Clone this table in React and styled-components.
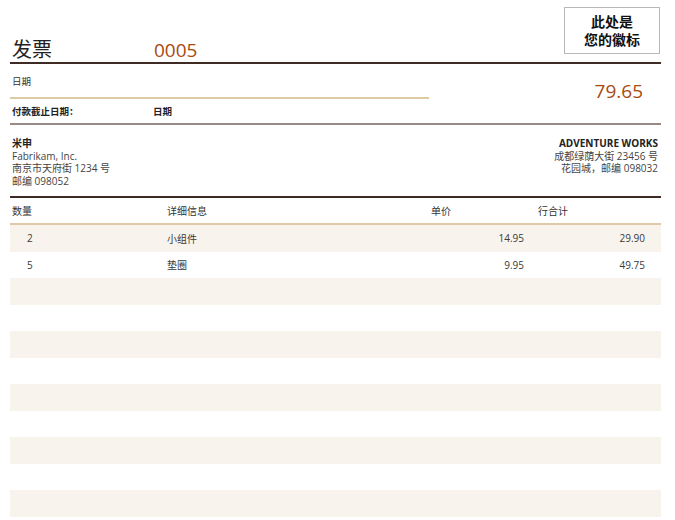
import React from "react";
import styled, { createGlobalStyle } from "styled-components";

const GlobalStyle = createGlobalStyle`
  html, body {
    margin: 0;
    padding: 0;
    overflow: hidden;
    background: #fff;
  }
  body {
    font-family: "Open Sans", "Noto Sans CJK SC", sans-serif;
    color: #333;
  }
`;

const Page = styled.div`
  width: 651px;
  margin-left: 10px;
`;

const Header = styled.div`
  display: flex;
  align-items: flex-end;
  padding-top: 7px;
  border-bottom: 2px solid #3d2b24;
`;

const Title = styled.div`
  width: 142px;
  padding-left: 2px;
  font-size: 20px;
  line-height: 24px;
  color: #222;
`;

const InvoiceNo = styled.div`
  flex: 1;
  font-size: 19px;
  line-height: 24px;
  color: #a84a10;
`;

const LogoBox = styled.div`
  width: 94px;
  height: 45px;
  margin: 0 1px 8px 0;
  border: 1px solid #b8b8b8;
  display: flex;
  flex-direction: column;
  justify-content: center;
  align-items: center;
  font-size: 14px;
  line-height: 18px;
  font-weight: bold;
  color: #111;
`;

const InfoGrid = styled.div`
  display: grid;
  grid-template-columns: 419px 1fr;
  border-bottom: 2px solid #9a8a86;
`;

const DateCell = styled.div`
  height: 33px;
  display: flex;
  align-items: center;
  padding-left: 2px;
  border-bottom: 2px solid #dccba4;
  font-size: 9.5px;
  color: #333;
`;

const DueCell = styled.div`
  height: 24px;
  display: flex;
  align-items: center;
  padding-left: 2px;
  font-size: 9.5px;
  font-weight: bold;
  color: #222;
`;

const DueLabel = styled.span`
  width: 141px;
`;

const Amount = styled.div`
  grid-column: 2;
  grid-row: 1 / span 2;
  align-self: center;
  text-align: right;
  padding: 0 18px 6px 0;
  font-size: 19px;
  line-height: 24px;
  color: #a84a10;
`;

const Parties = styled.div`
  display: flex;
  justify-content: space-between;
  padding: 12px 3px 9px 2px;
  border-bottom: 2px solid #3d2b24;
  font-size: 10px;
  line-height: 12.5px;
  color: #444;
`;

const Party = styled.div`
  text-align: ${(p) => (p.right ? "right" : "left")};
`;

const PartyName = styled.div`
  font-weight: bold;
  color: #222;
`;

const Table = styled.div`
  display: grid;
  grid-template-columns: 157px 264px 107px 123px;
  font-size: 10px;
  color: #3a3a3a;
`;

const HeadCell = styled.div`
  height: 25px;
  display: flex;
  align-items: center;
  padding-left: ${(p) => (p.first ? "2px" : "0")};
  border-bottom: 2px solid #dccba4;
  color: #333;
`;

const Cell = styled.div`
  height: 26.5px;
  display: flex;
  align-items: center;
  justify-content: ${(p) => (p.num ? "flex-end" : "flex-start")};
  padding-left: ${(p) => p.pl || "0"};
  padding-right: ${(p) => p.pr || "0"};
  background: ${(p) => (p.shade ? "#f8f3ec" : "#fff")};
`;

const items = [
  { qty: "2", name: "小组件", price: "14.95", total: "29.90" },
  { qty: "5", name: "垫圈", price: "9.95", total: "49.75" },
];

const rows = [...items];
while (rows.length < 12) rows.push({ qty: "", name: "", price: "", total: "" });

export default function App() {
  return (
    <Page>
      <GlobalStyle />
      <Header>
        <Title>发票</Title>
        <InvoiceNo>0005</InvoiceNo>
        <LogoBox>
          <div>此处是</div>
          <div>您的徽标</div>
        </LogoBox>
      </Header>

      <InfoGrid>
        <DateCell>日期</DateCell>
        <DueCell>
          <DueLabel>付款截止日期：</DueLabel>
          <span>日期</span>
        </DueCell>
        <Amount>79.65</Amount>
      </InfoGrid>

      <Parties>
        <Party>
          <PartyName>米申</PartyName>
          <div>Fabrikam, Inc.</div>
          <div>南京市天府街 1234 号</div>
          <div>邮编 098052</div>
        </Party>
        <Party right>
          <PartyName>ADVENTURE WORKS</PartyName>
          <div>成都绿荫大街 23456 号</div>
          <div>花园城，邮编 098032</div>
        </Party>
      </Parties>

      <Table>
        <HeadCell first>数量</HeadCell>
        <HeadCell>详细信息</HeadCell>
        <HeadCell>单价</HeadCell>
        <HeadCell>行合计</HeadCell>
        {rows.map((r, i) => {
          const shade = i % 2 === 0;
          return (
            <React.Fragment key={i}>
              <Cell shade={shade} pl="17px">{r.qty}</Cell>
              <Cell shade={shade}>{r.name}</Cell>
              <Cell shade={shade} num pr="14px">{r.price}</Cell>
              <Cell shade={shade} num pr="16px">{r.total}</Cell>
            </React.Fragment>
          );
        })}
      </Table>
    </Page>
  );
}
